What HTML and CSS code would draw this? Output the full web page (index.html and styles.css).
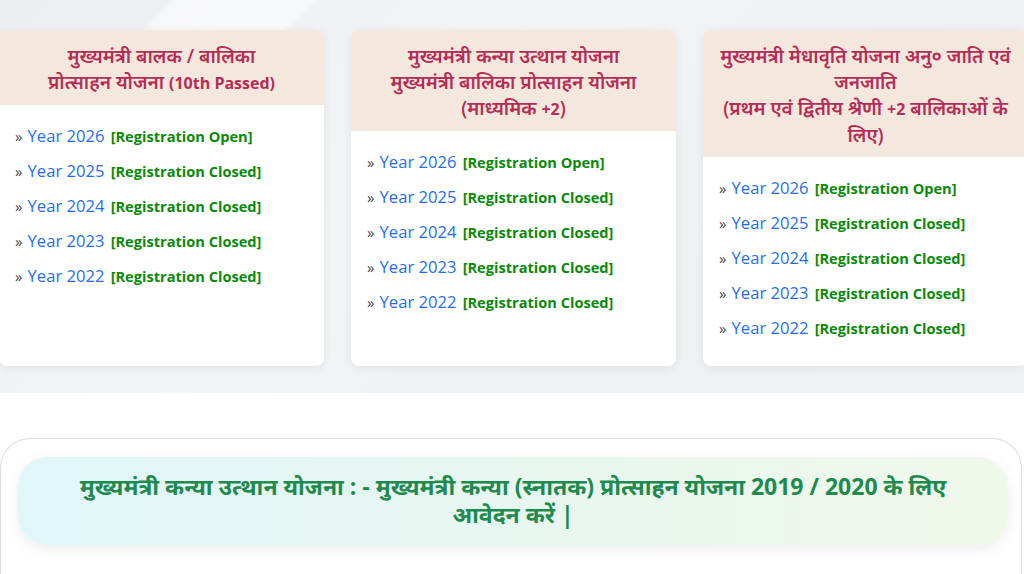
FILE: index.html
```html
<!DOCTYPE html>
<html lang="hi">
<head>
<meta charset="utf-8">
<title>Yojana</title>
<link rel="stylesheet" href="styles.css">
</head>
<body>
<section class="schemes">
  <div class="cards">
    <div class="card">
      <div class="card-head">मुख्यमंत्री बालक / बालिका<br>प्रोत्साहन योजना <span class="lat">(10th Passed)</span></div>
      <ul class="years">
        <li><span class="raquo">»</span> <a class="yr">Year 2026</a> <b class="st">[Registration Open]</b></li>
        <li><span class="raquo">»</span> <a class="yr">Year 2025</a> <b class="st">[Registration Closed]</b></li>
        <li><span class="raquo">»</span> <a class="yr">Year 2024</a> <b class="st">[Registration Closed]</b></li>
        <li><span class="raquo">»</span> <a class="yr">Year 2023</a> <b class="st">[Registration Closed]</b></li>
        <li><span class="raquo">»</span> <a class="yr">Year 2022</a> <b class="st">[Registration Closed]</b></li>
      </ul>
    </div>
    <div class="card">
      <div class="card-head">मुख्यमंत्री कन्या उत्थान योजना<br>मुख्यमंत्री बालिका प्रोत्साहन योजना<br>(माध्यमिक <span class="lat">+2</span>)</div>
      <ul class="years">
        <li><span class="raquo">»</span> <a class="yr">Year 2026</a> <b class="st">[Registration Open]</b></li>
        <li><span class="raquo">»</span> <a class="yr">Year 2025</a> <b class="st">[Registration Closed]</b></li>
        <li><span class="raquo">»</span> <a class="yr">Year 2024</a> <b class="st">[Registration Closed]</b></li>
        <li><span class="raquo">»</span> <a class="yr">Year 2023</a> <b class="st">[Registration Closed]</b></li>
        <li><span class="raquo">»</span> <a class="yr">Year 2022</a> <b class="st">[Registration Closed]</b></li>
      </ul>
    </div>
    <div class="card">
      <div class="card-head">मुख्यमंत्री मेधावृति योजना अनु० जाति एवं<br>जनजाति<br>(प्रथम एवं द्वितीय श्रेणी <span class="lat">+2</span> बालिकाओं के<br>लिए)</div>
      <ul class="years">
        <li><span class="raquo">»</span> <a class="yr">Year 2026</a> <b class="st">[Registration Open]</b></li>
        <li><span class="raquo">»</span> <a class="yr">Year 2025</a> <b class="st">[Registration Closed]</b></li>
        <li><span class="raquo">»</span> <a class="yr">Year 2024</a> <b class="st">[Registration Closed]</b></li>
        <li><span class="raquo">»</span> <a class="yr">Year 2023</a> <b class="st">[Registration Closed]</b></li>
        <li><span class="raquo">»</span> <a class="yr">Year 2022</a> <b class="st">[Registration Closed]</b></li>
      </ul>
    </div>
  </div>
</section>
<section class="notice-wrap">
  <div class="notice-box">
    <div class="notice">मुख्यमंत्री कन्या उत्थान योजना : - मुख्यमंत्री कन्या (स्नातक) प्रोत्साहन योजना 2019 / 2020 के लिए आवेदन करें |</div>
  </div>
</section>
</body>
</html>
```
FILE: styles.css
```css
html, body {
  margin: 0;
  padding: 0;
  background: #ffffff;
  font-family: "Open Sans", "Noto Sans", sans-serif;
  overflow: hidden;
}
.schemes {
  height: 393px;
  background:
    linear-gradient(135deg, transparent 0%, transparent 12%, rgba(255, 255, 255, 0.55) 12.5%, rgba(255, 255, 255, 0.55) 22%, transparent 22.5%),
    linear-gradient(135deg, #eceef1 0%, #f3f4f6 40%, #eef0f3 70%, #f1f2f4 100%);
  box-sizing: border-box;
  padding-top: 30px;
}
.cards {
  display: flex;
  gap: 27px;
  margin-left: -1px;
  width: 1100px;
}
.card {
  width: 325px;
  flex: none;
  background: #ffffff;
  border-radius: 8px;
  overflow: hidden;
  box-shadow: 0 2px 10px rgba(0, 0, 0, 0.07);
  height: 336px;
}
.card-head {
  background: #f4e8de;
  color: #b52c55;
  text-align: center;
  font-size: 19px;
  font-weight: 600;
  line-height: 26px;
  padding: 13px 8px 9px;
  white-space: nowrap;
}
.lat {
  font-size: 16px;
  font-weight: 700;
}
.years {
  list-style: none;
  margin: 0;
  padding: 13px 15px 20px;
}
.years li {
  height: 35px;
  line-height: 35px;
  white-space: nowrap;
}
.raquo {
  color: #444444;
  font-size: 15px;
  margin-left: 1px;
}
.yr {
  color: #1f6fe8;
  font-size: 16.6px;
  margin-left: 1px;
}
.st {
  color: #0a8a0a;
  font-size: 14.6px;
  font-weight: 700;
  margin-left: 2px;
}
.notice-wrap {
  padding-top: 45px;
}
.notice-box {
  margin: 0 2px 0 0;
  border: 1px solid #dddddd;
  border-bottom: none;
  border-radius: 30px 30px 0 0;
  padding: 18px 13px 40px 17px;
}
.notice {
  background: linear-gradient(90deg, #e0f6f9 0%, #e9f6ee 60%, #f0f8ea 100%);
  border-radius: 30px;
  box-shadow: 0 4px 14px rgba(0, 0, 0, 0.08);
  color: #1e8a4e;
  font-weight: 700;
  font-size: 23px;
  line-height: 28px;
  text-align: center;
  padding: 15px 40px 17px;
}
```
